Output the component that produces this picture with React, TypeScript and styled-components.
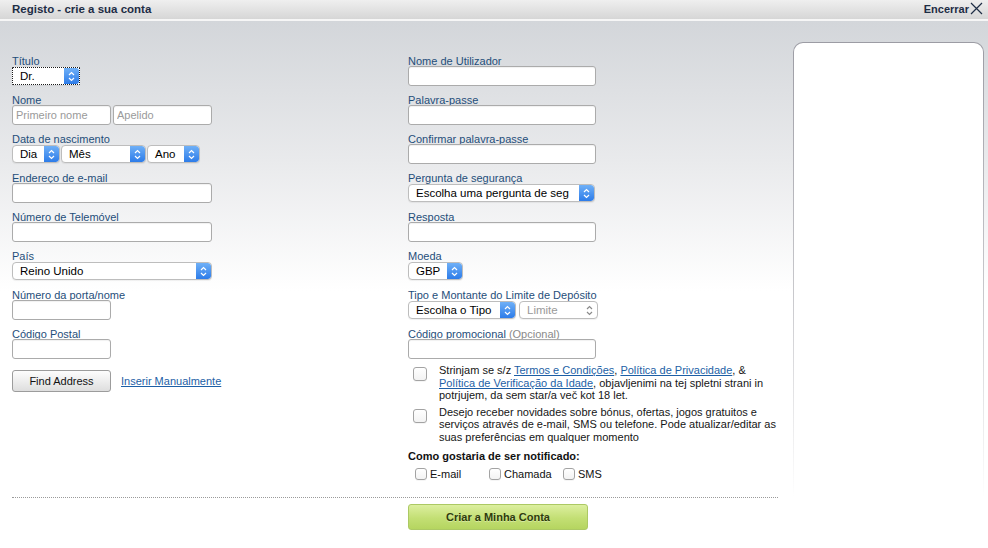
import React from 'react';
import styled, { createGlobalStyle } from 'styled-components';

const GlobalStyle = createGlobalStyle`
  html, body {
    margin: 0;
    padding: 0;
    background: #ffffff;
    font-family: "Liberation Sans", Arial, sans-serif;
  }
  * {
    box-sizing: border-box;
  }
`;

const Chevrons: React.FC<{ color: string }> = ({ color }) => (
  <svg width="7" height="11" viewBox="0 0 7 11">
    <path d="M1 4 L3.5 1.5 L6 4" fill="none" stroke={color} strokeWidth="1.2" />
    <path d="M1 7 L3.5 9.5 L6 7" fill="none" stroke={color} strokeWidth="1.2" />
  </svg>
);

type SelectProps = {
  width: number;
  value: string;
  focused?: boolean;
  disabled?: boolean;
};

const Select: React.FC<SelectProps> = ({ width, value, focused, disabled }) => (
  <SelectBox $w={width} $focused={focused} $disabled={disabled}>
    <SelectValue $disabled={disabled}>{value}</SelectValue>
    <SelectCap $disabled={disabled}>
      <Chevrons color={disabled ? '#8a8a8a' : '#ffffff'} />
    </SelectCap>
  </SelectBox>
);

const Checkbox: React.FC<{ small?: boolean }> = ({ small }) => <CheckBox $small={small} />;

const App: React.FC = () => {
  return (
    <>
      <GlobalStyle />
      <Page>
        <Header>
          <HeaderTitle>Registo - crie a sua conta</HeaderTitle>
          <CloseButton>
            Encerrar
            <svg width="13" height="13" viewBox="0 0 13 13">
              <path d="M1 1 L12 12 M12 1 L1 12" stroke="#1e2d45" strokeWidth="1.2" />
            </svg>
          </CloseButton>
        </Header>
        <Body>
          <FormArea>
            <Columns>
              <Column>
                <FieldStack>
                  <Field>
                    <Label>Título</Label>
                    <Control>
                      <Select width={68} value="Dr." focused />
                    </Control>
                  </Field>
                  <Field>
                    <Label>Nome</Label>
                    <Control>
                      <Input $w={99} placeholder="Primeiro nome" />
                      <Input $w={99} placeholder="Apelido" />
                    </Control>
                  </Field>
                  <Field>
                    <Label>Data de nascimento</Label>
                    <Control $gap={1}>
                      <Select width={48} value="Dia" />
                      <Select width={85} value="Mês" />
                      <Select width={53} value="Ano" />
                    </Control>
                  </Field>
                  <Field>
                    <Label>Endereço de e-mail</Label>
                    <Control>
                      <Input $w={200} />
                    </Control>
                  </Field>
                  <Field>
                    <Label>Número de Telemóvel</Label>
                    <Control>
                      <Input $w={200} />
                    </Control>
                  </Field>
                  <Field>
                    <Label>País</Label>
                    <Control>
                      <Select width={200} value="Reino Unido" />
                    </Control>
                  </Field>
                  <Field>
                    <Label>Número da porta/nome</Label>
                    <Control>
                      <Input $w={99} />
                    </Control>
                  </Field>
                  <Field>
                    <Label>Código Postal</Label>
                    <Control>
                      <Input $w={99} />
                    </Control>
                  </Field>
                </FieldStack>
                <AddressRow>
                  <GreyButton>Find Address</GreyButton>
                  <ManualLink href="#">Inserir Manualmente</ManualLink>
                </AddressRow>
              </Column>

              <Column>
                <FieldStack>
                  <Field>
                    <Label>Nome de Utilizador</Label>
                    <Control>
                      <Input $w={188} />
                    </Control>
                  </Field>
                  <Field>
                    <Label>Palavra-passe</Label>
                    <Control>
                      <Input $w={188} type="password" />
                    </Control>
                  </Field>
                  <Field>
                    <Label>Confirmar palavra-passe</Label>
                    <Control>
                      <Input $w={188} type="password" />
                    </Control>
                  </Field>
                  <Field>
                    <Label>Pergunta de segurança</Label>
                    <Control>
                      <Select width={187} value="Escolha uma pergunta de seg" />
                    </Control>
                  </Field>
                  <Field>
                    <Label>Resposta</Label>
                    <Control>
                      <Input $w={188} />
                    </Control>
                  </Field>
                  <Field>
                    <Label>Moeda</Label>
                    <Control>
                      <Select width={55} value="GBP" />
                    </Control>
                  </Field>
                  <Field>
                    <Label>Tipo e Montante do Limite de Depósito</Label>
                    <Control $gap={3}>
                      <Select width={108} value="Escolha o Tipo" />
                      <Select width={79} value="Limite" disabled />
                    </Control>
                  </Field>
                  <Field>
                    <Label>
                      Código promocional <Optional>(Opcional)</Optional>
                    </Label>
                    <Control>
                      <Input $w={188} />
                    </Control>
                  </Field>
                </FieldStack>

                <Consent>
                  <Checkbox />
                  <ConsentText>
                    Strinjam se s/z <TextLink href="#">Termos e Condições</TextLink>,{' '}
                    <TextLink href="#">Política de Privacidade</TextLink>, &amp;{' '}
                    <TextLink href="#">Política de Verificação da Idade</TextLink>, objavljenimi na
                    tej spletni strani in potrjujem, da sem star/a več kot 18 let.
                  </ConsentText>
                </Consent>
                <Consent $spaced>
                  <Checkbox />
                  <ConsentText>
                    Desejo receber novidades sobre bónus, ofertas, jogos gratuitos e serviços
                    através de e-mail, SMS ou telefone. Pode atualizar/editar as suas
                    preferências em qualquer momento
                  </ConsentText>
                </Consent>

                <NotifyHeading>Como gostaria de ser notificado:</NotifyHeading>
                <NotifyRow>
                  <NotifyOption>
                    <Checkbox small />
                    E-mail
                  </NotifyOption>
                  <NotifyOption>
                    <Checkbox small />
                    Chamada
                  </NotifyOption>
                  <NotifyOption>
                    <Checkbox small />
                    SMS
                  </NotifyOption>
                </NotifyRow>
              </Column>
            </Columns>

            <Divider />
            <SubmitRow>
              <GreenButton>Criar a Minha Conta</GreenButton>
            </SubmitRow>
          </FormArea>

          <SidePanel>
            <SidePanelInner />
          </SidePanel>
        </Body>
      </Page>
    </>
  );
};

const Page = styled.div`
  width: 988px;
  min-height: 548px;
  display: flex;
  flex-direction: column;
  font-size: 11px;
  color: #111;
`;

const Header = styled.div`
  height: 21px;
  padding: 0 5px 2px 12px;
  display: flex;
  align-items: center;
  justify-content: space-between;
  background: linear-gradient(#efefef, #d6d6d6);
  border-bottom: 2px solid #f6f6f6;
`;

const HeaderTitle = styled.div`
  font-weight: 700;
  font-size: 11.5px;
  color: #1e2d45;
`;

const CloseButton = styled.div`
  display: flex;
  align-items: center;
  gap: 1px;
  font-weight: 700;
  font-size: 11px;
  color: #1e2d45;
  cursor: pointer;
`;

const Body = styled.div`
  flex: 1;
  display: flex;
  gap: 15px;
  padding: 0 4px 0 12px;
  background: linear-gradient(#d3d6da 0px, #e9eaec 140px, #ffffff 270px);
`;

const FormArea = styled.div`
  width: 766px;
  padding-top: 35px;
`;

const Columns = styled.div`
  display: grid;
  grid-template-columns: 396px 370px;
`;

const Column = styled.div`
  display: flex;
  flex-direction: column;
`;

const FieldStack = styled.div`
  display: flex;
  flex-direction: column;
  gap: 9px;
`;

const Field = styled.div`
  display: flex;
  flex-direction: column;
`;

const Label = styled.div`
  height: 11px;
  line-height: 11px;
  margin-bottom: -1px;
  font-size: 11px;
  color: #1f4e7a;
  text-decoration: none;
  white-space: nowrap;
`;

const Optional = styled.span`
  color: #8a8a8a;
`;

const Control = styled.div<{ $gap?: number }>`
  height: 20px;
  display: flex;
  align-items: center;
  gap: ${({ $gap }) => ($gap === undefined ? 2 : $gap)}px;
`;

const Input = styled.input<{ $w: number }>`
  width: ${({ $w }) => $w}px;
  height: 20px;
  padding: 0 3px;
  border: 1px solid #ababab;
  border-radius: 3px;
  background: #fff;
  box-shadow: inset 0 1px 1px rgba(0, 0, 0, 0.06);
  font-family: "Liberation Sans", Arial, sans-serif;
  font-size: 11px;
  color: #111;
  outline: none;
  &::placeholder {
    color: #9a9a9a;
  }
`;

const SelectBox = styled.div<{ $w: number; $focused?: boolean; $disabled?: boolean }>`
  width: ${({ $w }) => $w}px;
  height: 18px;
  display: flex;
  align-items: stretch;
  border: 1px ${({ $focused }) => ($focused ? 'dotted #1a1a1a' : 'solid #bdbdbd')};
  border-radius: ${({ $focused }) => ($focused ? '1px' : '4px')};
  background: #fff;
  box-shadow: 0 1px 1px rgba(0, 0, 0, 0.06);
  overflow: hidden;
`;

const SelectValue = styled.span<{ $disabled?: boolean }>`
  flex: 1;
  min-width: 0;
  padding-left: 7px;
  line-height: 16px;
  font-size: 11.5px;
  color: ${({ $disabled }) => ($disabled ? '#9a9a9a' : '#000')};
  white-space: nowrap;
  overflow: hidden;
`;

const SelectCap = styled.span<{ $disabled?: boolean }>`
  width: 15px;
  flex: none;
  display: flex;
  align-items: center;
  justify-content: center;
  border-radius: 0 3px 3px 0;
  background: ${({ $disabled }) =>
    $disabled ? 'transparent' : 'linear-gradient(#6fb0f7, #2d7ce9)'};
`;

const AddressRow = styled.div`
  margin-top: 11px;
  display: flex;
  align-items: center;
  gap: 10px;
`;

const GreyButton = styled.button`
  width: 99px;
  height: 22px;
  padding: 0;
  border: 1px solid #9c9c9c;
  border-radius: 3px;
  background: linear-gradient(#fdfdfd, #dedede);
  font-family: "Liberation Sans", Arial, sans-serif;
  font-size: 11px;
  color: #111;
  cursor: pointer;
`;

const ManualLink = styled.a`
  font-size: 11px;
  color: #1d5fa6;
  text-decoration: underline;
`;

const Consent = styled.div<{ $spaced?: boolean }>`
  margin-top: ${({ $spaced }) => ($spaced ? 4 : 5)}px;
  padding-left: 5px;
  display: flex;
  align-items: flex-start;
  gap: 12px;
`;

const CheckBox = styled.span<{ $small?: boolean }>`
  flex: none;
  display: inline-block;
  width: ${({ $small }) => ($small ? 12 : 14)}px;
  height: ${({ $small }) => ($small ? 12 : 14)}px;
  margin-top: ${({ $small }) => ($small ? 0 : 3)}px;
  border: 1px solid #a3a3a3;
  border-radius: 3px;
  background: linear-gradient(#ffffff, #f3f3f3);
  box-shadow: 0 1px 0 rgba(0, 0, 0, 0.04);
`;

const ConsentText = styled.p`
  margin: 0;
  width: 339px;
  font-size: 11px;
  line-height: 12.5px;
  color: #161616;
`;

const TextLink = styled.a`
  color: #1d5fa6;
  text-decoration: underline;
`;

const NotifyHeading = styled.div`
  margin-top: 7px;
  font-weight: 700;
  font-size: 11px;
  line-height: 12.5px;
  color: #111;
`;

const NotifyRow = styled.div`
  margin-top: 5px;
  padding-left: 7px;
  display: flex;
`;

const NotifyOption = styled.label`
  width: 74px;
  display: flex;
  align-items: center;
  gap: 3px;
  font-size: 11px;
  line-height: 12.5px;
  color: #111;
`;

const Divider = styled.div`
  margin-top: 17px;
  border-top: 1px dotted #9a9a9a;
`;

const SubmitRow = styled.div`
  margin-top: 6px;
  padding-left: 396px;
`;

const GreenButton = styled.button`
  width: 180px;
  height: 26px;
  padding: 0;
  border: 1px solid #acc964;
  border-radius: 3px;
  background: linear-gradient(#dcef9f, #c3df74 55%, #b5d560);
  font-family: "Liberation Sans", Arial, sans-serif;
  font-weight: 700;
  font-size: 11px;
  color: #2f3c0c;
  text-shadow: 0 1px 0 rgba(255, 255, 255, 0.35);
  cursor: pointer;
`;

const SidePanel = styled.div`
  width: 191px;
  height: 456px;
  margin-top: 21px;
  padding: 1px 1px 0;
  border-radius: 10px 10px 0 0;
  background: linear-gradient(#9c9ca4, #c8c8cc 55%, rgba(255, 255, 255, 0));
`;

const SidePanelInner = styled.div`
  height: 100%;
  border-radius: 9px 9px 0 0;
  background: #ffffff;
`;

export default App;
